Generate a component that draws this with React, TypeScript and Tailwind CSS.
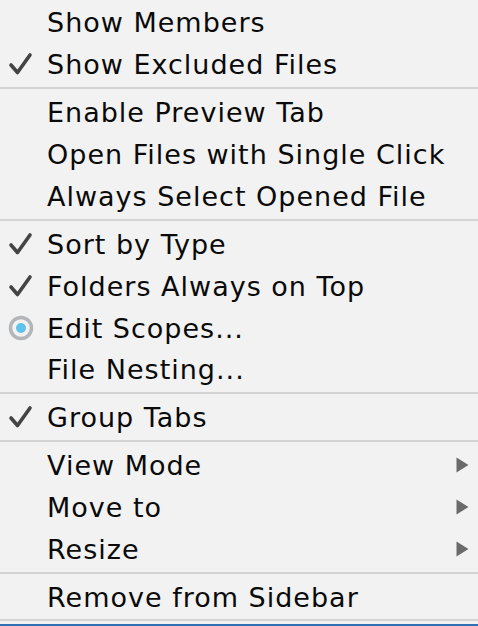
import type { ReactNode } from 'react'

type Item =
  | { kind: 'sep' }
  | { kind: 'item'; label: string; mark?: 'check' | 'radio'; submenu?: boolean }

const items: Item[] = [
  { kind: 'item', label: 'Show Members' },
  { kind: 'item', label: 'Show Excluded Files', mark: 'check' },
  { kind: 'sep' },
  { kind: 'item', label: 'Enable Preview Tab' },
  { kind: 'item', label: 'Open Files with Single Click' },
  { kind: 'item', label: 'Always Select Opened File' },
  { kind: 'sep' },
  { kind: 'item', label: 'Sort by Type', mark: 'check' },
  { kind: 'item', label: 'Folders Always on Top', mark: 'check' },
  { kind: 'item', label: 'Edit Scopes...', mark: 'radio' },
  { kind: 'item', label: 'File Nesting...' },
  { kind: 'sep' },
  { kind: 'item', label: 'Group Tabs', mark: 'check' },
  { kind: 'sep' },
  { kind: 'item', label: 'View Mode', submenu: true },
  { kind: 'item', label: 'Move to', submenu: true },
  { kind: 'item', label: 'Resize', submenu: true },
  { kind: 'sep' },
  { kind: 'item', label: 'Remove from Sidebar' },
]

function Check() {
  return (
    <svg width="26" height="24" viewBox="0 0 26 24">
      <path d="M3 13 L9.5 20.5 L22 3" fill="none" stroke="#444" strokeWidth="3.6" strokeLinecap="round" strokeLinejoin="round" />
    </svg>
  )
}

function Radio() {
  return (
    <svg width="26" height="26" viewBox="0 0 26 26">
      <circle cx="13" cy="13" r="10.5" fill="#f2f2f2" stroke="#b2b6b9" strokeWidth="3.5" />
      <circle cx="13" cy="13" r="5" fill="#5ec2ea" />
    </svg>
  )
}

function Arrow() {
  return (
    <svg width="13" height="16" viewBox="0 0 13 16">
      <path d="M0.5 0.5 L12.5 8 L0.5 15.5 Z" fill="#6a6a6a" />
    </svg>
  )
}

function Row({ label, mark, submenu }: { label: string; mark?: 'check' | 'radio'; submenu?: boolean }) {
  let icon: ReactNode = null
  if (mark === 'check') icon = <Check />
  if (mark === 'radio') icon = <Radio />
  return (
    <div className="h-[42px] flex items-center">
      <div className="w-[47px] shrink-0 flex items-center justify-center pl-[2px] pr-[7px]">{icon}</div>
      <span className="flex-1 text-[27px] tracking-[1px] text-[#0a0a0a] leading-none pt-[1px]">{label}</span>
      {submenu && (
        <div className="w-[22px] shrink-0 flex items-center">
          <Arrow />
        </div>
      )}
    </div>
  )
}

export default function App() {
  return (
    <div
      className="w-[478px] h-[626px] bg-[#f2f2f2] overflow-hidden flex flex-col pt-[1px]"
      style={{ fontFamily: '"DejaVu Sans", sans-serif' }}
    >
      {items.map((it, i) =>
        it.kind === 'sep' ? (
          <div key={i} className="h-[6px] flex items-center">
            <div className="h-[2px] w-full bg-[#d3d3d3]" />
          </div>
        ) : (
          <Row key={i} label={it.label} mark={it.mark} submenu={it.submenu} />
        )
      )}
      <div className="h-[6px] flex flex-col">
        <div className="h-[2px] w-full bg-[#d3d3d3] mt-[1px]" />
      </div>
      <div className="h-[2px] bg-[#2f6fb4]" />
    </div>
  )
}
